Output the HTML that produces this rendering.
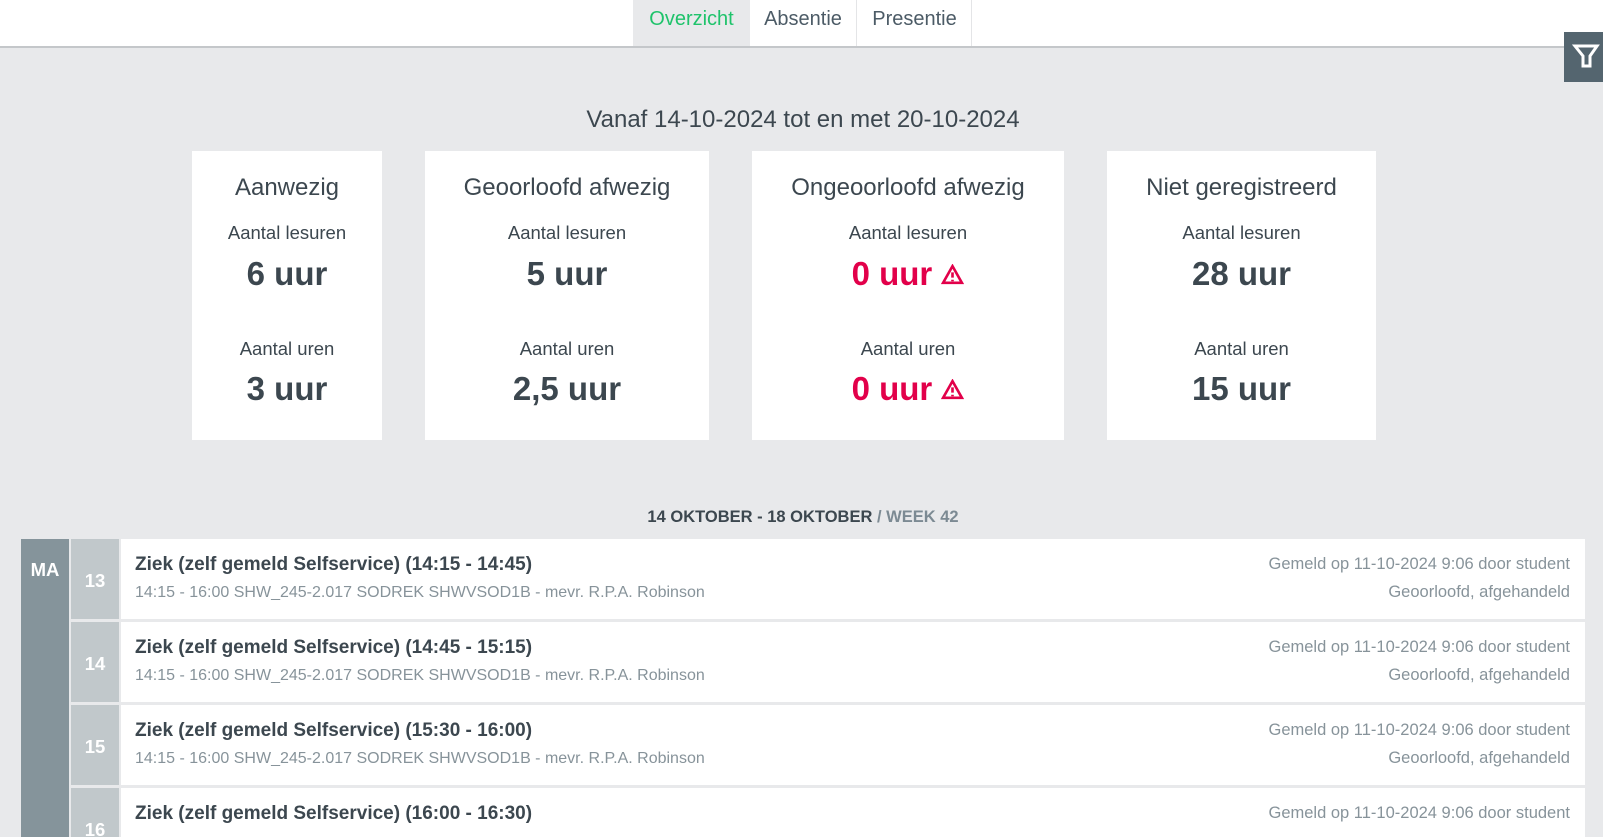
<!DOCTYPE html>
<html><head><meta charset="utf-8"><style>
*{box-sizing:border-box;margin:0;padding:0}
html,body{width:1603px;height:837px;overflow:hidden}
body{background:#e8e9eb;font-family:"Liberation Sans",sans-serif;color:#3c474f;position:relative}
.top{position:absolute;left:0;top:0;width:1603px;height:48px;background:#fff;border-bottom:2px solid #c4c7ca}
.tab{position:absolute;top:0;height:46px;line-height:38px;font-size:20px;text-align:center;color:#4c5b66}
.filter{position:absolute;left:1564px;top:32px;width:39px;height:50px;background:#54656f}
h1{position:absolute;top:106px;left:0;width:1606px;text-align:center;font-size:24px;font-weight:normal;color:#3c474f}
.card{position:absolute;top:151px;height:289px;background:#fff;text-align:center}
.card div{position:absolute;left:0;width:100%;text-align:center}
.card .t{top:23px;font-size:24px;line-height:28px}
.card .l{font-size:18.5px;line-height:22px}
.card .v{font-size:33px;font-weight:bold;line-height:38px}
.red{color:#e2004a}
.wk{position:absolute;top:508px;left:0;width:1606px;text-align:center;font-size:16.5px;font-weight:bold;color:#3c474f}
.wk span{color:#7c8a93}
.day{position:absolute;left:21px;top:539px;width:48px;height:310px;background:#85949b;color:#fff;font-size:18.5px;font-weight:bold;text-align:center;padding-top:20px}
.row{position:absolute;left:71px;width:1514px;height:80px}
.row .n{position:absolute;left:0;top:0;width:48px;height:80px;background:#c1c8cb;color:#fff;font-size:18.5px;font-weight:bold;text-align:center;line-height:84px}
.row .c{position:absolute;left:50px;top:0;right:0;height:80px;background:#fff}
.c .a{position:absolute;left:14px;top:15px;font-size:19px;font-weight:bold;color:#3c474f}
.c .b{position:absolute;left:14px;top:45px;font-size:16px;color:#87939a}
.c .r1{position:absolute;right:15px;top:16px;font-size:16.5px;color:#87939a}
.c .r2{position:absolute;right:15px;top:44px;font-size:16.5px;color:#87939a}
</style></head><body>
<div class="top">
<div class="tab" style="left:633px;width:117px;background:#e8e9eb;color:#1fc36b">Overzicht</div>
<div class="tab" style="left:750px;width:107px;border-right:1px solid #e4e5e7">Absentie</div>
<div class="tab" style="left:858px;width:114px;border-right:1px solid #e4e5e7">Presentie</div>
</div>
<div class="filter"><svg width="39" height="50" viewBox="0 0 39 50"><path d="M11 14 H33 L26 24 V34 H19 V24 Z" fill="none" stroke="#fff" stroke-width="3"/></svg></div>
<h1>Vanaf 14-10-2024 tot en met 20-10-2024</h1>
<div class="card" style="left:192px;width:190px"><div class="t">Aanwezig</div><div class="l" style="top:71px">Aantal lesuren</div><div class="v" style="top:104px">6 uur</div><div class="l" style="top:187px">Aantal uren</div><div class="v" style="top:219px">3 uur</div></div>
<div class="card" style="left:425px;width:284px"><div class="t">Geoorloofd afwezig</div><div class="l" style="top:71px">Aantal lesuren</div><div class="v" style="top:104px">5 uur</div><div class="l" style="top:187px">Aantal uren</div><div class="v" style="top:219px">2,5 uur</div></div>
<div class="card" style="left:752px;width:312px"><div class="t">Ongeoorloofd afwezig</div><div class="l" style="top:71px">Aantal lesuren</div><div class="v red" style="top:104px">0 uur <svg width="23" height="21" viewBox="0 0 22 20"><path d="M11 2 L20 18 H2 Z" fill="none" stroke="#e2004a" stroke-width="2.5"/><path d="M11 8 V13 M11 15 V16.5" stroke="#e2004a" stroke-width="2.5"/></svg></div><div class="l" style="top:187px">Aantal uren</div><div class="v red" style="top:219px">0 uur <svg width="23" height="21" viewBox="0 0 22 20"><path d="M11 2 L20 18 H2 Z" fill="none" stroke="#e2004a" stroke-width="2.5"/><path d="M11 8 V13 M11 15 V16.5" stroke="#e2004a" stroke-width="2.5"/></svg></div></div>
<div class="card" style="left:1107px;width:269px"><div class="t">Niet geregistreerd</div><div class="l" style="top:71px">Aantal lesuren</div><div class="v" style="top:104px">28 uur</div><div class="l" style="top:187px">Aantal uren</div><div class="v" style="top:219px">15 uur</div></div>
<div class="wk">14 OKTOBER - 18 OKTOBER <span>/ WEEK 42</span></div>
<div class="day">MA</div>
<div class="row" style="top:539px"><div class="n">13</div><div class="c"><div class="a">Ziek (zelf gemeld Selfservice) (14:15 - 14:45)</div><div class="b">14:15 - 16:00 SHW_245-2.017 SODREK SHWVSOD1B - mevr. R.P.A. Robinson</div><div class="r1">Gemeld op 11-10-2024 9:06 door student</div><div class="r2">Geoorloofd, afgehandeld</div></div></div>
<div class="row" style="top:622px"><div class="n">14</div><div class="c"><div class="a">Ziek (zelf gemeld Selfservice) (14:45 - 15:15)</div><div class="b">14:15 - 16:00 SHW_245-2.017 SODREK SHWVSOD1B - mevr. R.P.A. Robinson</div><div class="r1">Gemeld op 11-10-2024 9:06 door student</div><div class="r2">Geoorloofd, afgehandeld</div></div></div>
<div class="row" style="top:705px"><div class="n">15</div><div class="c"><div class="a">Ziek (zelf gemeld Selfservice) (15:30 - 16:00)</div><div class="b">14:15 - 16:00 SHW_245-2.017 SODREK SHWVSOD1B - mevr. R.P.A. Robinson</div><div class="r1">Gemeld op 11-10-2024 9:06 door student</div><div class="r2">Geoorloofd, afgehandeld</div></div></div>
<div class="row" style="top:788px"><div class="n">16</div><div class="c"><div class="a">Ziek (zelf gemeld Selfservice) (16:00 - 16:30)</div><div class="r1">Gemeld op 11-10-2024 9:06 door student</div></div></div>
</body></html>
